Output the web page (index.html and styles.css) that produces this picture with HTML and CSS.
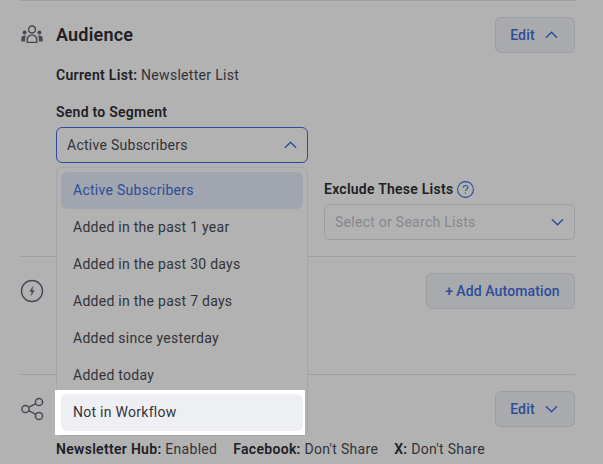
FILE: index.html
```html
<!DOCTYPE html>
<html lang="en">
<head>
<meta charset="utf-8">
<title>Campaign settings</title>
<link rel="stylesheet" href="styles.css">
</head>
<body>
<main class="page">
  <section class="section">
    <div class="head">
      <svg class="icon" viewBox="0 0 24 24" fill="none" stroke="#666a7c" stroke-width="1.4" aria-hidden="true">
        <circle cx="12" cy="6.4" r="3.4"/>
        <path d="M7.2 19.4v-3c0-2.4 1.6-3.600 3.200-4.300h3.200c1.600.7 3.200 1.900 3.200 4.300v3z"/>
        <g fill="#666a7c" stroke="none">
          <circle cx="4.600" cy="9.600" r="2"/><path d="M1.200 18.600v-2.600c0-2 1.300-3.400 3.400-3.400 .5 0 .9 .1 1.300 .2-.6 1-.8 2-.8 3.200v2.600z"/>
          <circle cx="19.400" cy="9.600" r="2"/><path d="M22.800 18.600v-2.600c0-2-1.300-3.400-3.400-3.400-.5 0-.9 .1-1.300 .2 .6 1 .8 2 .8 3.200v2.600z"/>
        </g>
      </svg>
      <h2 class="title">Audience</h2>
      <button class="btn btn-edit">Edit
        <svg class="chev" viewBox="0 0 14 8" fill="none" stroke="currentColor" stroke-width="1.5"><path d="M1 7l6-6 6 6"/></svg>
      </button>
    </div>
    <div class="body">
      <p class="line"><b>Current List:</b> Newsletter List</p>
      <div class="fields">
        <div class="field">
          <label class="label">Send to Segment</label>
          <div class="select open">
            <span>Active Subscribers</span>
            <svg class="chev" viewBox="0 0 14 8" fill="none" stroke="currentColor" stroke-width="1.5"><path d="M1 7l6-6 6 6"/></svg>
          </div>
          <ul class="menu">
            <li class="item active">Active Subscribers</li>
            <li class="item">Added in the past 1 year</li>
            <li class="item">Added in the past 30 days</li>
            <li class="item">Added in the past 7 days</li>
            <li class="item">Added since yesterday</li>
            <li class="item">Added today</li>
            <li class="spot"><div class="item hover">Not in Workflow</div></li>
          </ul>
        </div>
        <div class="field field-end">
          <label class="label label-help">Exclude These Lists
            <svg class="help" viewBox="0 0 17 17" fill="none" stroke="currentColor" stroke-width="1.1"><circle cx="8.500" cy="8.500" r="7.900"/><path d="M6.300 6.700c0-1.300 1-2.200 2.300-2.200s2.200.9 2.200 2c0 1.700-2.300 1.700-2.300 3.600"/><path d="M8.500 11.400v1.300"/></svg>
          </label>
          <div class="select">
            <span class="placeholder">Select or Search Lists</span>
            <svg class="chev" viewBox="0 0 14 8" fill="none" stroke="currentColor" stroke-width="1.5"><path d="M1 1l6 6 6-6"/></svg>
          </div>
        </div>
      </div>
    </div>
  </section>

  <section class="section section-auto">
    <div class="head">
      <svg class="icon" viewBox="0 0 24 24" fill="none" stroke="#666a7c" stroke-width="1.4" aria-hidden="true">
        <circle cx="12" cy="12" r="10.500"/>
        <path d="M12.800 7.500l-3 5h2.200l-.8 4 3-5h-2.200z" fill="#666a7c" stroke-width=".5"/>
      </svg>
      <div class="spacer"></div>
      <button class="btn btn-add"><span class="plus">+</span>Add Automation</button>
    </div>
  </section>

  <section class="section">
    <div class="head">
      <svg class="icon" viewBox="0 0 24 24" fill="none" stroke="#666a7c" stroke-width="1.500" aria-hidden="true">
        <circle cx="5.500" cy="12" r="3.600"/><circle cx="19" cy="5" r="3.600"/><circle cx="19" cy="19" r="3.600"/>
        <path d="M8.700 10.300l7.100-3.600M8.700 13.700l7.100 3.600"/>
      </svg>
      <div class="spacer"></div>
      <button class="btn btn-edit">Edit
        <svg class="chev" viewBox="0 0 14 8" fill="none" stroke="currentColor" stroke-width="1.5"><path d="M1 1l6 6 6-6"/></svg>
      </button>
    </div>
    <p class="line share"><span><b>Newsletter Hub:</b> Enabled</span><span><b>Facebook:</b> Don't Share</span><span><b>X:</b> Don't Share</span></p>
  </section>
</main>
<div class="overlay"></div>
</body>
</html>
```
FILE: styles.css
```css
* { box-sizing: border-box; }
html, body { margin: 0; height: 464px; overflow: hidden; background: #fff; }
body { font-family: Roboto, "Liberation Sans", sans-serif; font-size: 14px; color: #4a4b52; letter-spacing: .27px; position: relative; }
.page { padding: 0 28px 0 20px; }
.section { border-top: 1px solid #e3e4e9; padding: 16px 0; }
.section-auto { padding-bottom: 65px; }
.head { display: flex; align-items: center; height: 36px; gap: 12px; }
.icon { width: 24px; height: 24px; flex: none; }
.title { margin: 0 0 2px; font: 600 18px Roboto, sans-serif; flex: 1; letter-spacing: .2px; color: #2e2f36; }
.spacer { flex: 1; }
.btn { height: 36px; padding: 0; border: 1px solid #dfe2ea; border-radius: 6px; background: #f2f4f9; color: #3f6fdc; font: 500 14px Roboto, sans-serif; letter-spacing: .2px; display: flex; align-items: center; justify-content: center; }
.btn-edit { width: 80px; gap: 10px; padding-right: 2px; }
.btn-add { width: 149px; padding-left: 4px; letter-spacing: .12px; }
.plus { margin-right: 3px; }
.chev { width: 13px; height: 8px; flex: none; color: #3f6fdc; }
.body { padding-left: 36px; }
.line { margin: 0; line-height: 20px; letter-spacing: .3px; }
.line b { font-weight: 600; color: #2e2f36; }
.body .line { margin-top: 12px; }
.fields { display: grid; grid-template-columns: 252px 251px; gap: 16px; margin-top: 17px; }
.field { position: relative; display: flex; flex-direction: column; }
.field-end { justify-content: flex-end; }
.label { font-weight: 600; line-height: 20px; letter-spacing: .25px; display: flex; align-items: center; gap: 4px; margin-bottom: 5px; color: #2e2f36; }
.help { width: 17px; height: 17px; color: #3f6fdc; }
.select { height: 36px; border: 1px solid #dfe2ea; border-radius: 6px; padding: 0 10px; display: flex; align-items: center; justify-content: space-between; background: #fff; }
.select.open { border-color: #3f6fdc; margin-bottom: 77px; }
.placeholder { color: #c0c3cc; }
.menu { position: absolute; top: 65px; left: 0; width: 252px; margin: 0; padding: 4px 4px 0; list-style: none; background: #fff; border: 1px solid #eceef2; border-radius: 6px; height: 269px; }
.item { height: 37px; display: flex; align-items: center; padding: 0 12px 2px; border-radius: 6px; }
.active { background: #e6edfb; color: #3f6fdc; }
.spot { position: relative; z-index: 10; background: #fff; margin: -4px -2px 0 -6px; padding: 4px 2px 4px 6px; }
.hover { background: #eeeff3; color: #33343b; }
.overlay { position: absolute; inset: 0; background: rgba(0,0,0,.3); z-index: 5; }
.share { padding-left: 36px; display: flex; gap: 16px; margin-top: 12px; }
```
